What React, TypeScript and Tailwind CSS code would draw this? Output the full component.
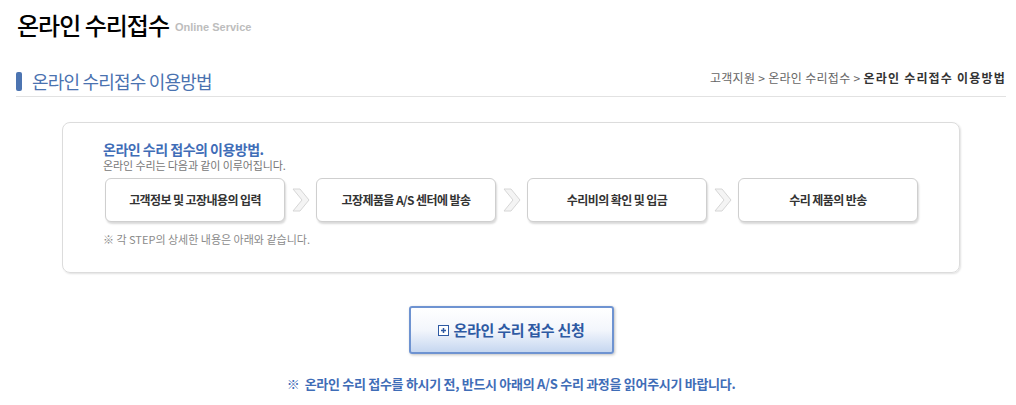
import React from "react";

const kr = { fontFamily: '"Noto Sans CJK KR", "Noto Sans", sans-serif' };

const steps = [
  "고객정보 및 고장내용의 입력",
  "고장제품을 A/S 센터에 발송",
  "수리비의 확인 및 입금",
  "수리 제품의 반송",
];

const Chevron: React.FC = () => (
  <svg width="31" height="26" viewBox="0 0 31 26" className="shrink-0">
    <polygon
      points="8,2 15,2 24,13 15,24 8,24 17,13"
      fill="#f4f4f4"
      stroke="#d6d6d6"
      strokeWidth="1"
      strokeLinejoin="round"
    />
  </svg>
);

export default function App() {
  return (
    <div className="w-[1016px] h-[405px] bg-white overflow-hidden" style={kr}>
      <div className="flex items-end pl-[17px] pt-[3px] h-[40px]">
        <h1 className="text-[24px] leading-[30px] tracking-[-1px] text-black font-medium">
          온라인 수리접수
        </h1>
        <span
          className="ml-[6px] mb-[5px] text-[11px] font-bold text-[#bdbdbd]"
          style={{ fontFamily: '"Liberation Sans", Arial, sans-serif' }}
        >
          Online Service
        </span>
      </div>

      <div className="mx-[16px] w-[990px]">
        <div className="mt-[31px] flex items-center justify-between h-[20px] pb-0">
          <div className="flex items-center">
            <span className="w-[6px] h-[19px] rounded-[2px] bg-[#4c74b1]" />
            <span className="ml-[10px] text-[18px] leading-[20px] tracking-[-0.8px] text-[#4a72b0]">
              온라인 수리접수 이용방법
            </span>
          </div>
          <div className="text-[12px] tracking-[0.3px] text-[#666] mb-[6px]">
            고객지원 &gt; 온라인 수리접수 &gt;{" "}
            <span className="font-bold text-[#333] tracking-[1.2px]">온라인 수리접수 이용방법</span>
          </div>
        </div>
        <div className="mt-[5px] h-px bg-[#e2e2e2]" />

        <div className="mt-[25px] mx-auto w-[898px] h-[151px] rounded-[8px] border border-[#dcdcdc] shadow-[1px_1px_2px_rgba(0,0,0,0.12)] pl-[40px] pt-[17px]">
          <div className="text-[14px] leading-[18px] font-bold tracking-[-0.5px] text-[#3f6db7]">
            온라인 수리 접수의 이용방법.
          </div>
          <div className="text-[11px] leading-[14px] tracking-[-0.1px] text-[#777]">
            온라인 수리는 다음과 같이 이루어집니다.
          </div>
          <div className="mt-[6px] ml-[2px] flex items-center">
            {steps.map((s, i) => (
              <React.Fragment key={s}>
                {i > 0 && <Chevron />}
                <div className="w-[180px] h-[44px] shrink-0 rounded-[6px] border border-[#cfcfcf] bg-white shadow-[1px_2px_2px_rgba(0,0,0,0.15)] flex items-center justify-center text-[12px] font-bold tracking-[-0.6px] text-[#333]">
                  {s}
                </div>
              </React.Fragment>
            ))}
          </div>
          <div className="mt-[9px] text-[11px] tracking-[0px] text-[#8a8a8a]">
            ※ 각 STEP의 상세한 내용은 아래와 같습니다.
          </div>
        </div>

        <div className="mt-[33px] flex justify-center">
          <button className="w-[205px] h-[48px] rounded-[3px] border-2 border-[#6e93d1] bg-gradient-to-b from-[#ffffff] via-[#f3f6fc] to-[#c6d7f0] shadow-[1px_1px_3px_rgba(0,0,0,0.25)] flex items-center justify-center gap-[5px] text-[15px] font-bold tracking-[-0.3px] text-[#2e5aa3]">
            <svg width="11" height="11" viewBox="0 0 11 11">
              <rect x="0.5" y="0.5" width="10" height="10" fill="white" stroke="#2e5aa3" />
              <path d="M3 5.5h5M5.5 3v5" stroke="#2e5aa3" strokeWidth="1.5" />
            </svg>
            온라인 수리 접수 신청
          </button>
        </div>

        <div className="mt-[20px] text-center text-[13px] font-bold tracking-[-0.3px] text-[#3f6db7]">
          ※ &nbsp;온라인 수리 접수를 하시기 전, 반드시 아래의 A/S 수리 과정을 읽어주시기 바랍니다.
        </div>
      </div>
    </div>
  );
}
